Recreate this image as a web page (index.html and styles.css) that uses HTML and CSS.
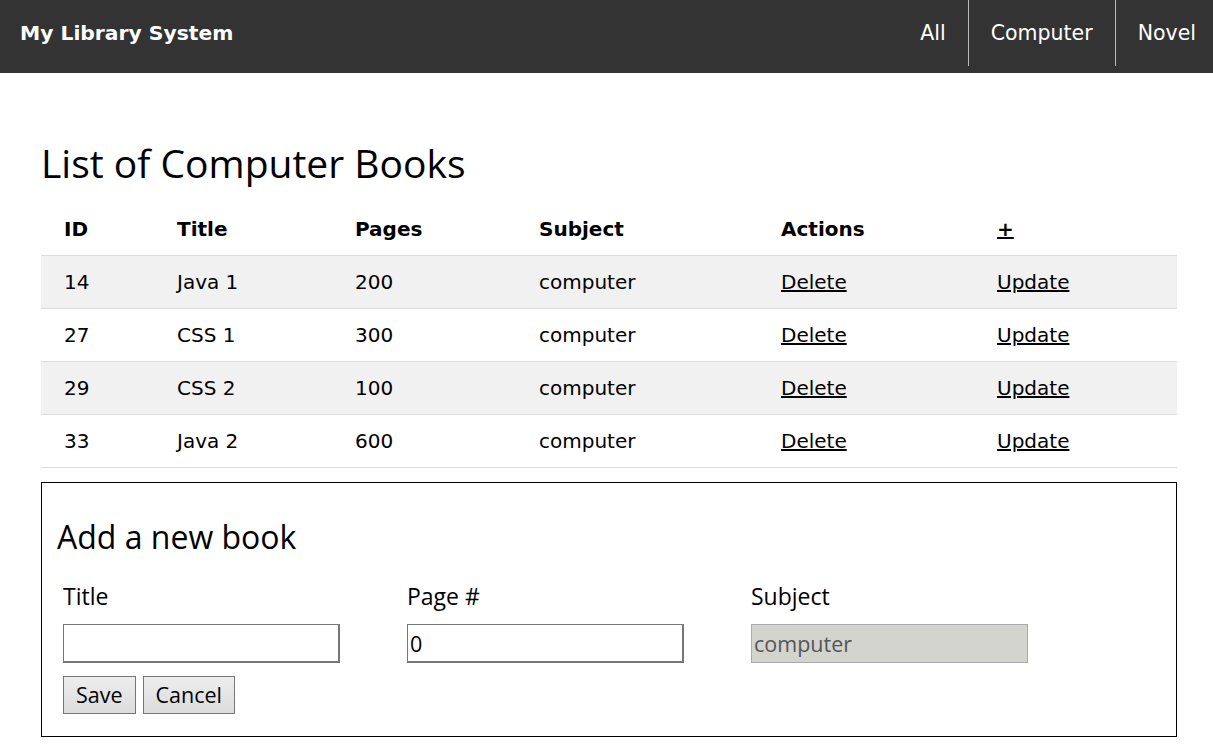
FILE: index.html
```html
<!DOCTYPE html>
<html lang="en">
<head>
<meta charset="utf-8">
<title>My Library System</title>
<link rel="stylesheet" href="styles.css">
</head>
<body>
<nav class="navbar">
  <div class="brand">My Library System</div>
  <ul class="nav-links">
    <li><a href="#">All</a></li>
    <li><a href="#">Computer</a></li>
    <li><a href="#">Novel</a></li>
  </ul>
</nav>
<main class="content">
  <h1 class="page-title">List of Computer Books</h1>
  <table class="books">
    <thead>
      <tr>
        <th class="c-id">ID</th>
        <th class="c-title">Title</th>
        <th class="c-pages">Pages</th>
        <th class="c-subject">Subject</th>
        <th class="c-actions">Actions</th>
        <th class="c-extra"><a href="#">+</a></th>
      </tr>
    </thead>
    <tbody>
      <tr><td>14</td><td>Java 1</td><td>200</td><td>computer</td><td><a href="#">Delete</a></td><td><a href="#">Update</a></td></tr>
      <tr><td>27</td><td>CSS 1</td><td>300</td><td>computer</td><td><a href="#">Delete</a></td><td><a href="#">Update</a></td></tr>
      <tr><td>29</td><td>CSS 2</td><td>100</td><td>computer</td><td><a href="#">Delete</a></td><td><a href="#">Update</a></td></tr>
      <tr><td>33</td><td>Java 2</td><td>600</td><td>computer</td><td><a href="#">Delete</a></td><td><a href="#">Update</a></td></tr>
    </tbody>
  </table>
  <section class="add-box">
    <h2 class="add-title">Add a new book</h2>
    <div class="fields">
      <div class="field">
        <label class="field-label">Title</label>
        <input class="field-input" type="text" value="">
      </div>
      <div class="field">
        <label class="field-label">Page #</label>
        <input class="field-input" type="text" value="0">
      </div>
      <div class="field">
        <label class="field-label">Subject</label>
        <input class="field-input" type="text" value="computer" disabled>
      </div>
    </div>
    <div class="buttons">
      <button class="btn" type="button">Save</button>
      <button class="btn" type="button">Cancel</button>
    </div>
  </section>
</main>
</body>
</html>
```

FILE: styles.css
```css
html, body {
  margin: 0;
  padding: 0;
  background: #fff;
}
body {
  font-family: "Open Sans", "Noto Sans", sans-serif;
  color: #000;
}
.navbar {
  height: 73px;
  background: #333;
  display: flex;
  align-items: flex-start;
  justify-content: space-between;
}
.brand {
  font-family: "DejaVu Sans", Verdana, sans-serif;
  font-weight: bold;
  font-size: 20.3px;
  color: #fff;
  line-height: 66px;
  padding-left: 20px;
}
.nav-links {
  list-style: none;
  margin: 0;
  padding: 0 17px 0 0;
  display: flex;
}
.nav-links li + li {
  border-left: 1px solid #bbb;
}
.nav-links a {
  display: block;
  line-height: 66px;
  padding: 0 22px;
  color: #fff;
  text-decoration: none;
  font-family: "DejaVu Sans", Verdana, sans-serif;
  font-size: 20.5px;
}
.nav-links li:last-child a {
  padding-right: 0;
}
.content {
  padding: 0 36px 0 41px;
}
.page-title {
  font-weight: normal;
  font-size: 39px;
  margin: 0;
  padding-top: 65px;
  line-height: 50px;
}
.books {
  width: 100%;
  border-collapse: collapse;
  margin-top: 15px;
  font-family: "DejaVu Sans", Verdana, sans-serif;
  font-size: 20px;
}
.books th, .books td {
  text-align: left;
  padding: 0 0 0 23px;
  height: 52px;
}
.books th {
  font-weight: bold;
  border-bottom: 1px solid #ddd;
}
.books td {
  border-bottom: 1px solid #ddd;
}
.books tbody tr:nth-child(odd) {
  background: #f1f1f1;
}
.books a {
  color: #000;
}
.c-id { width: 90px; }
.c-title { width: 155px; }
.c-pages { width: 161px; }
.c-subject { width: 219px; }
.c-actions { width: 193px; }
.add-box {
  margin-top: 14px;
  border: 1px solid #000;
  padding: 30px 15px 22px;
}
.add-title {
  font-weight: normal;
  font-size: 32px;
  margin: 0;
  line-height: 48px;
}
.fields {
  display: flex;
  padding-left: 6px;
  margin-top: 21px;
}
.field {
  width: 344px;
  display: flex;
  flex-direction: column;
  align-items: flex-start;
}
.field-label {
  font-size: 23px;
  line-height: 28px;
  margin-bottom: 14px;
}
.field-input {
  box-sizing: border-box;
  width: 277px;
  height: 39px;
  border: 1px solid #767676;
  border-right-width: 2px;
  border-bottom-width: 2px;
  font-family: "Open Sans", "Noto Sans", sans-serif;
  font-size: 21.5px;
  padding: 0 2px;
  color: #000;
  background: #fff;
}
.field-input:disabled {
  background: #d4d4cf;
  border: 1px solid #aaa;
  color: #555;
}
.buttons {
  display: flex;
  gap: 7px;
  padding-left: 6px;
  margin-top: 13px;
}
.btn {
  height: 38px;
  box-sizing: border-box;
  padding: 0 12px;
  font-family: "Open Sans", "Noto Sans", sans-serif;
  font-size: 21.5px;
  line-height: 1;
  color: #000;
  border: 1px solid #767676;
  background: linear-gradient(#ededed, #dcdcdc);
}
```
